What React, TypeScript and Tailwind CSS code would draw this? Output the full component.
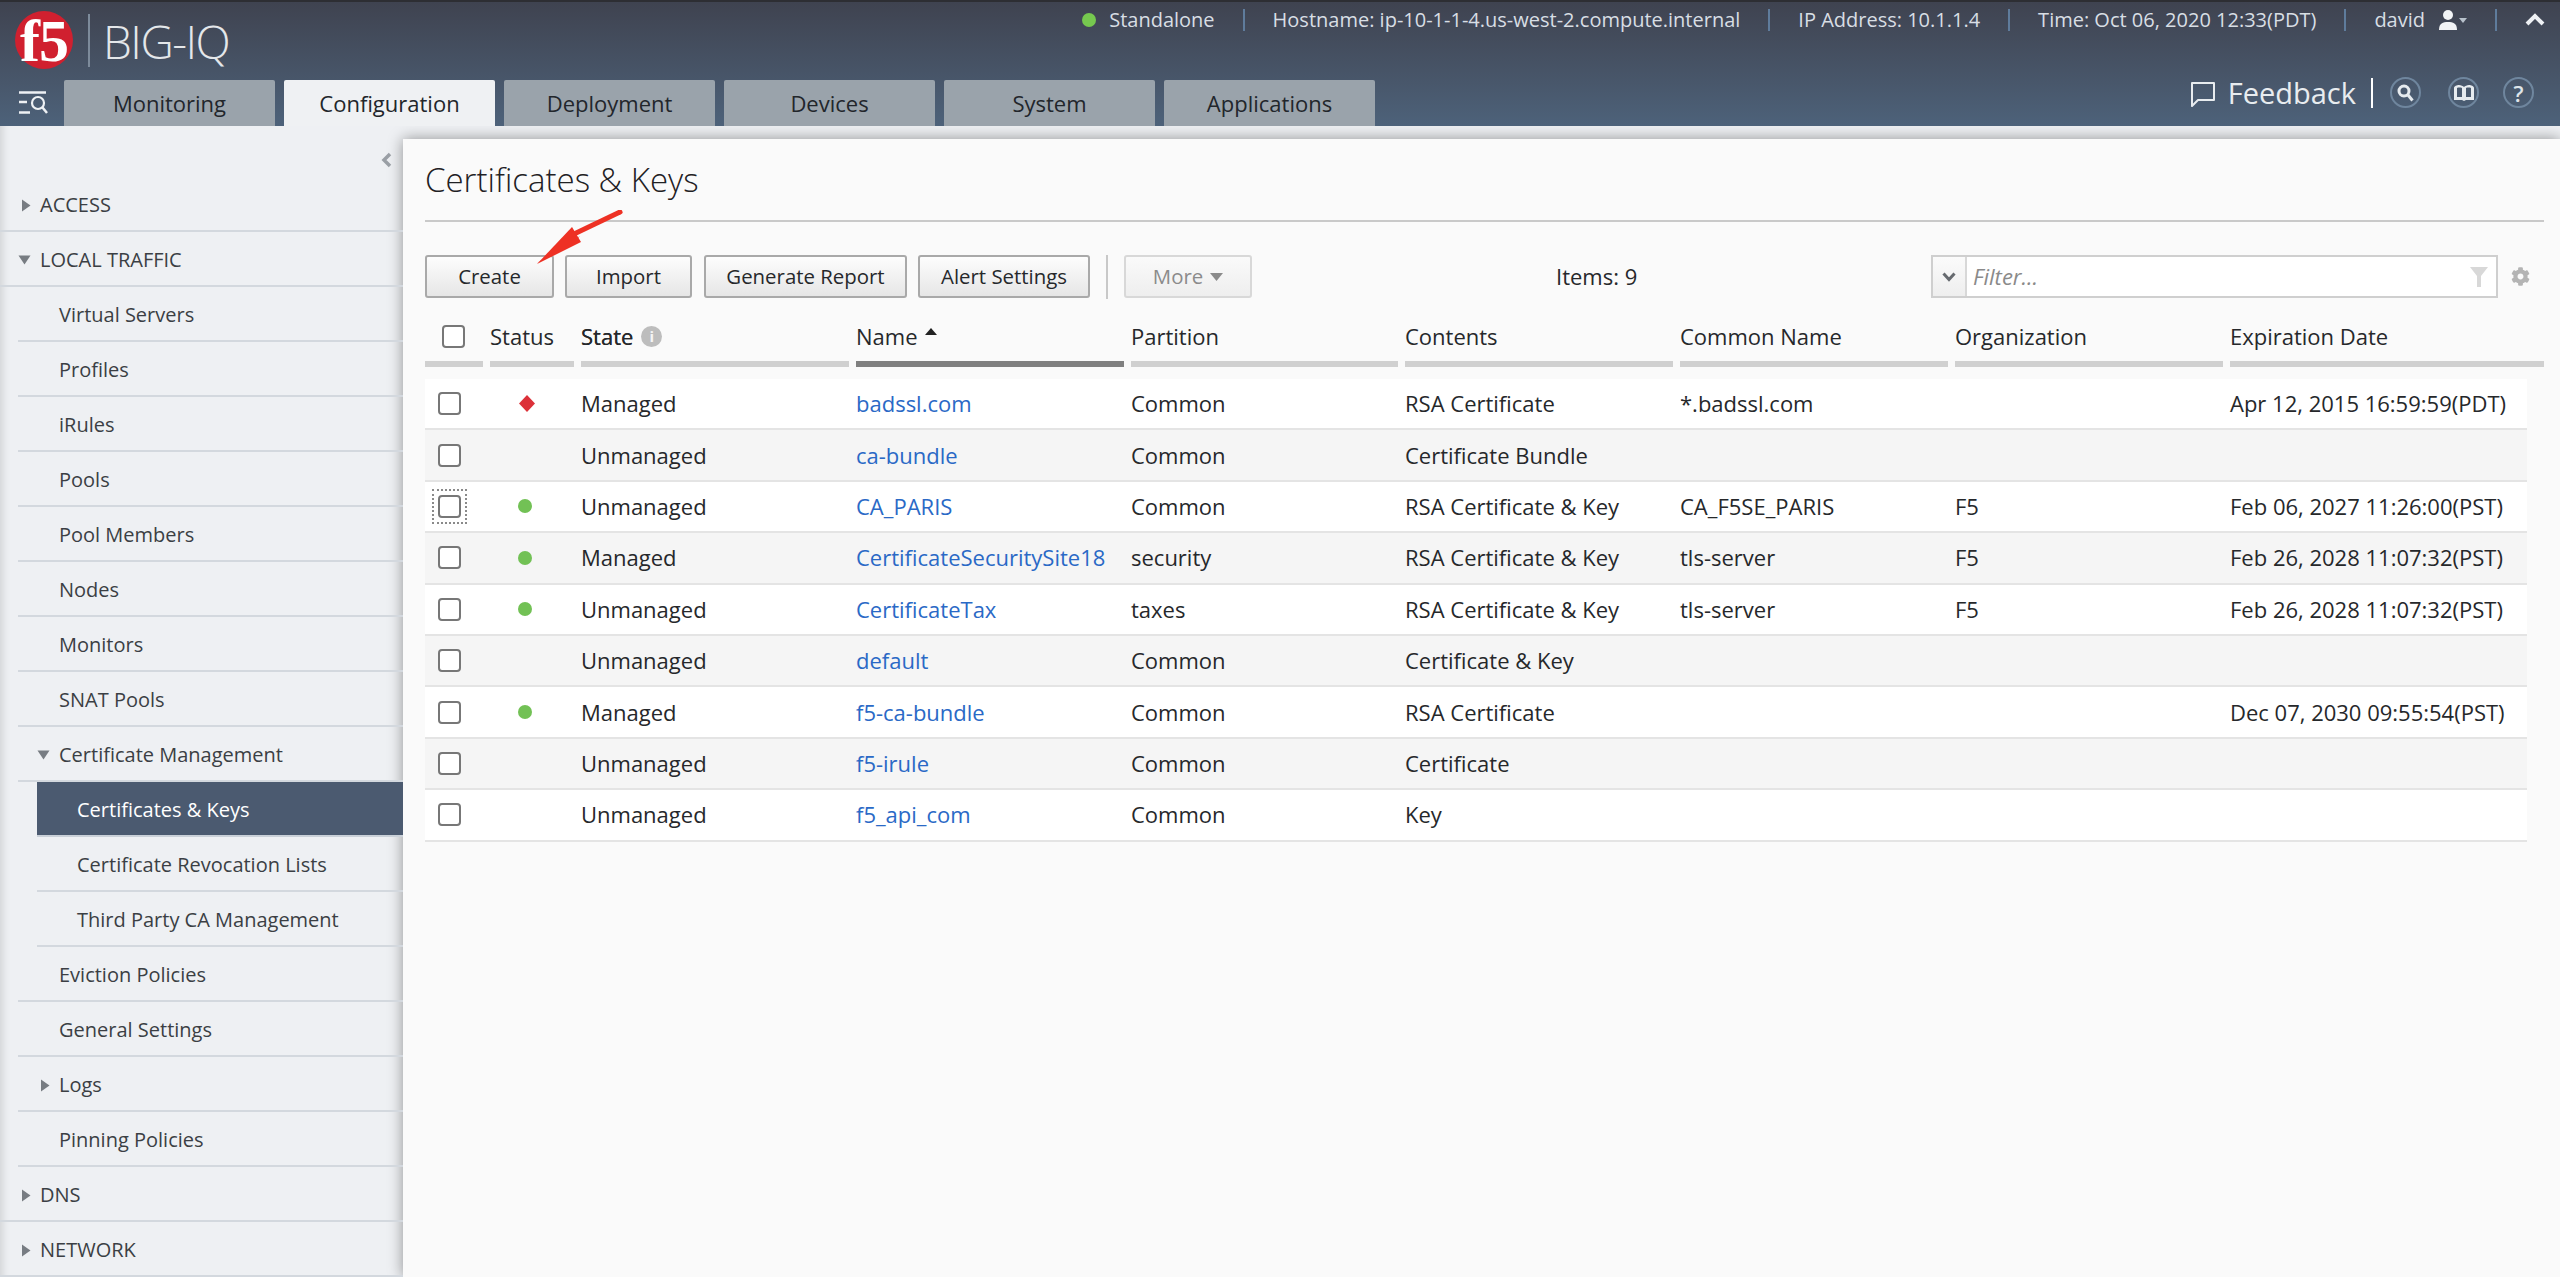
import React from "react";
import { FaCog } from "react-icons/fa";

const tabs = ["Monitoring", "Configuration", "Deployment", "Devices", "System", "Applications"];

type NavItem = { label: string; level: 0 | 1 | 2; arrow?: "right" | "down"; selected?: boolean };
const nav: NavItem[] = [
  { label: "ACCESS", level: 0, arrow: "right" },
  { label: "LOCAL TRAFFIC", level: 0, arrow: "down" },
  { label: "Virtual Servers", level: 1 },
  { label: "Profiles", level: 1 },
  { label: "iRules", level: 1 },
  { label: "Pools", level: 1 },
  { label: "Pool Members", level: 1 },
  { label: "Nodes", level: 1 },
  { label: "Monitors", level: 1 },
  { label: "SNAT Pools", level: 1 },
  { label: "Certificate Management", level: 1, arrow: "down" },
  { label: "Certificates & Keys", level: 2, selected: true },
  { label: "Certificate Revocation Lists", level: 2 },
  { label: "Third Party CA Management", level: 2 },
  { label: "Eviction Policies", level: 1 },
  { label: "General Settings", level: 1 },
  { label: "Logs", level: 1, arrow: "right" },
  { label: "Pinning Policies", level: 1 },
  { label: "DNS", level: 0, arrow: "right" },
  { label: "NETWORK", level: 0, arrow: "right" },
];

type Row = { status?: "ok" | "bad"; state: string; name: string; partition: string; contents: string; common?: string; org?: string; exp?: string; focus?: boolean };
const rows: Row[] = [
  { status: "bad", state: "Managed", name: "badssl.com", partition: "Common", contents: "RSA Certificate", common: "*.badssl.com", exp: "Apr 12, 2015 16:59:59(PDT)" },
  { state: "Unmanaged", name: "ca-bundle", partition: "Common", contents: "Certificate Bundle" },
  { status: "ok", state: "Unmanaged", name: "CA_PARIS", partition: "Common", contents: "RSA Certificate & Key", common: "CA_F5SE_PARIS", org: "F5", exp: "Feb 06, 2027 11:26:00(PST)", focus: true },
  { status: "ok", state: "Managed", name: "CertificateSecuritySite18", partition: "security", contents: "RSA Certificate & Key", common: "tls-server", org: "F5", exp: "Feb 26, 2028 11:07:32(PST)" },
  { status: "ok", state: "Unmanaged", name: "CertificateTax", partition: "taxes", contents: "RSA Certificate & Key", common: "tls-server", org: "F5", exp: "Feb 26, 2028 11:07:32(PST)" },
  { state: "Unmanaged", name: "default", partition: "Common", contents: "Certificate & Key" },
  { status: "ok", state: "Managed", name: "f5-ca-bundle", partition: "Common", contents: "RSA Certificate", exp: "Dec 07, 2030 09:55:54(PST)" },
  { state: "Unmanaged", name: "f5-irule", partition: "Common", contents: "Certificate" },
  { state: "Unmanaged", name: "f5_api_com", partition: "Common", contents: "Key" },
];

function Caret({ dir }: { dir: "right" | "down" }) {
  return dir === "right" ? (
    <svg width="10" height="13" viewBox="0 0 10 13" className="shrink-0"><path d="M1 0.5 L9.5 6.5 L1 12.5 Z" fill="#777c82" /></svg>
  ) : (
    <svg width="13" height="10" viewBox="0 0 13 10" className="shrink-0"><path d="M0.5 0.5 H12.5 L6.5 9.5 Z" fill="#777c82" /></svg>
  );
}

function TopSep() {
  return <div className="mx-[28px] h-[22px] w-[2px] bg-[#5f7c9c]" />;
}

function Logo() {
  return (
    <div className="flex h-[58px] w-[58px] shrink-0 items-center justify-center rounded-full bg-[#d0202f] pt-[3px] font-['Liberation_Serif',serif] text-[60px] leading-[55px] font-bold tracking-[-1px] text-white">
      f5
    </div>
  );
}

function CircleIcon({ children }: { children: React.ReactNode }) {
  return (
    <div className="flex h-[31px] w-[31px] items-center justify-center rounded-full border-2 border-[#6f869e] text-[#dfe5ea]">
      {children}
    </div>
  );
}

function Header() {
  return (
    <header className="h-[126px] shrink-0 border-t-2 border-[#2d2e33] bg-gradient-to-b from-[#3f4350] to-[#4d627a] flex flex-col">
      <div className="flex h-[78px] justify-between pl-[15px]">
        <div className="flex items-start pt-[9px]">
          <Logo />
          <div className="ml-[15px] mt-[3px] h-[53px] w-[2px] bg-[#7d8b9b]" />
          <span className="ml-[13px] mt-[-2px] text-[46px] leading-[64px] font-light tracking-[-1.5px] text-[#e4e7ea]">BIG-IQ</span>
        </div>
        <div className="flex h-[36px] items-center pr-[15px] text-[20px] text-[#d8dee4]">
          <span className="mr-[13px] h-[14px] w-[14px] rounded-full bg-[#76c94f]" />
          <span>Standalone</span>
          <TopSep />
          <span>Hostname: ip-10-1-1-4.us-west-2.compute.internal</span>
          <TopSep />
          <span>IP Address: 10.1.1.4</span>
          <TopSep />
          <span>Time: Oct 06, 2020 12:33(PDT)</span>
          <TopSep />
          <span>david</span>
          <svg width="28" height="20" viewBox="0 0 28 20" className="ml-[14px]">
            <circle cx="9" cy="5" r="5" fill="#f2f4f6" />
            <path d="M0 20 C0 13 4 12 9 12 C14 12 18 13 18 20 Z" fill="#f2f4f6" />
            <path d="M20 8 H28 L24 13 Z" fill="#b8c2cc" />
          </svg>
          <TopSep />
          <svg width="20" height="14" viewBox="0 0 20 14">
            <path d="M2 11 L10 3 L18 11" fill="none" stroke="#eef1f4" strokeWidth="4" />
          </svg>
        </div>
      </div>
      <div className="flex flex-1 items-end">
        <div className="flex h-[46px] w-[64px] items-center justify-center pl-[1px]">
          <svg width="30" height="24" viewBox="0 0 30 24" fill="none" stroke="#eef1f4">
            <path d="M1 1.5 H28" strokeWidth="2.5" />
            <path d="M1 11 H9" strokeWidth="2.5" />
            <path d="M1 21.5 H12" strokeWidth="2.5" />
            <circle cx="20" cy="12" r="6" strokeWidth="2.2" />
            <path d="M24.5 16.5 L29 22" strokeWidth="2.5" />
          </svg>
        </div>
        <div className="flex gap-[9px]">
          {tabs.map((t) => (
            <div
              key={t}
              className={
                t === "Configuration"
                  ? "flex h-[46px] w-[211px] items-center justify-center rounded-t-[2px] bg-[#eff1f3] text-[22px] text-[#22262b]"
                  : "flex h-[46px] w-[211px] items-center justify-center rounded-t-[2px] bg-[#9aa3ab] text-[22px] text-[#22262b]"
              }
            >
              {t}
            </div>
          ))}
        </div>
        <div className="ml-auto flex h-[46px] items-start pr-[26px] text-[#e8ecef]">
          <svg width="26" height="26" viewBox="0 0 26 26" fill="none" stroke="#e8ecef" strokeWidth="2" className="mt-[1px]">
            <path d="M2 2 H24 V19 H8 L2 25 Z" strokeLinejoin="round" />
          </svg>
          <span className="ml-[12px] mt-[-2px] text-[29px] leading-[30px] font-normal">Feedback</span>
          <div className="ml-[15px] mt-[-2px] h-[30px] w-[2px] bg-white" />
          <div className="ml-[17px] flex mt-[-3px]">
            <CircleIcon>
              <svg width="17" height="18" viewBox="0 0 17 18" fill="none" stroke="#e6ebef" strokeWidth="3">
                <circle cx="7" cy="7" r="5" />
                <path d="M11 11 L15.5 16.5" />
              </svg>
            </CircleIcon>
            <div className="w-[27px]" />
            <CircleIcon>
              <svg width="20" height="16" viewBox="0 0 20 16" fill="#e6ebef">
                <path d="M0 3 C0 1 3 0 5 0 C7 0 9 1 10 2 C11 1 13 0 15 0 C17 0 20 1 20 3 V15 H12 L10 16 L8 15 H0 Z M3 3 V12 H8 V3 C7 2.4 4 2.4 3 3 Z M12 3 V12 H17 V3 C16 2.4 13 2.4 12 3 Z" fillRule="evenodd" />
              </svg>
            </CircleIcon>
            <div className="w-[24px]" />
            <CircleIcon>
              <span className="text-[22px] leading-none font-semibold">?</span>
            </CircleIcon>
          </div>
        </div>
      </div>
    </header>
  );
}

function Sidebar() {
  return (
    <aside className="relative w-[403px] shrink-0 pt-[51px] shadow-[inset_10px_0_8px_-8px_rgba(0,0,0,0.14)]">
      <svg width="11" height="16" viewBox="0 0 11 16" className="absolute left-[381px] top-[26px]">
        <path d="M9 2 L3 8 L9 14" fill="none" stroke="#9a9fa5" strokeWidth="3.5" />
      </svg>
      {nav.map((n) => {
        const wrap = n.level === 0 ? "ml-0" : n.level === 1 ? "ml-[18px]" : "ml-[37px]";
        const base = "flex h-[55px] items-center border-b-2 pt-[3px] text-[20px] ";
        const color = n.selected ? "bg-[#4b5a70] text-white border-[#c9d0d8]" : "border-[#d3d8de] text-[#3b3f44]";
        return (
          <div key={n.label} className={wrap}>
            <div className={base + color}>
              <div className={n.level === 0 ? "flex w-[40px] justify-end pr-[9px]" : n.level === 1 ? "flex w-[41px] justify-end pr-[9px]" : "w-[40px]"}>
                {n.arrow && <Caret dir={n.arrow} />}
              </div>
              <span>{n.label}</span>
            </div>
          </div>
        );
      })}
    </aside>
  );
}

function Btn({ w, children, disabled }: { w: string; children: React.ReactNode; disabled?: boolean }) {
  return (
    <div
      className={
        w +
        (disabled
          ? " flex h-[43px] items-center justify-center rounded-[3px] border-2 border-[#d8d8d8] bg-gradient-to-b from-[#fafafa] to-[#eeeeee] text-[20.4px] text-[#8b8b8b]"
          : " flex h-[43px] items-center justify-center rounded-[3px] border-2 border-[#a9a9a9] bg-gradient-to-b from-[#fdfdfd] to-[#e6e6e6] text-[20.4px] text-[#26282b]")
      }
    >
      {children}
    </div>
  );
}

const cols = "grid grid-cols-[58px_84px_268px_268px_267px_268px_268px_268px_1fr] gap-x-[7px]";

function HeadCell({ children, dark }: { children?: React.ReactNode; dark?: boolean }) {
  return (
    <div className="flex h-[69px] flex-col justify-end">
      <div className="flex h-[28px] items-center text-[22px] text-[#26282b]">{children}</div>
      <div className={dark ? "mt-[11px] h-[6px] bg-[#808080]" : "mt-[11px] h-[6px] bg-[#d0d0d0]"} />
    </div>
  );
}

function Box({ focus }: { focus?: boolean }) {
  return (
    <div className={focus ? "flex h-[35px] w-[35px] items-center justify-center border-2 border-dotted border-[#8a8a8a]" : "flex h-[35px] w-[35px] items-center justify-center"}>
      <div className="h-[23px] w-[23px] rounded-[4px] border-2 border-[#777777] bg-white" />
    </div>
  );
}

function Content() {
  return (
    <main className="mt-[13px] flex-1 bg-[#fafafa] pl-[22px] pr-[16px] shadow-[0_0_14px_rgba(0,0,0,0.4)]">
      <div className="flex h-[83px] items-center border-b-2 border-[#c9c9c9]">
        <h1 className="text-[33px] font-light text-[#1f2124]">Certificates &amp; Keys</h1>
      </div>
      <div className="relative mt-[33px] flex h-[43px] items-center">
        <Btn w="w-[129px]">Create</Btn>
        <div className="w-[11px]" />
        <Btn w="w-[127px]">Import</Btn>
        <div className="w-[12px]" />
        <Btn w="w-[203px]">Generate Report</Btn>
        <div className="w-[11px]" />
        <Btn w="w-[172px]">Alert Settings</Btn>
        <div className="mx-[16px] h-[44px] w-[2px] bg-[#c8c8c8]" />
        <Btn w="w-[128px]" disabled>
          More
          <svg width="13" height="8" viewBox="0 0 13 8" className="ml-[7px]"><path d="M0 0 H13 L6.5 8 Z" fill="#8b8b8b" /></svg>
        </Btn>
        <span className="ml-[304px] text-[22px] text-[#26282b]">Items: 9</span>
        <div className="ml-auto flex h-[43px] w-[567px] border-2 border-[#cfcfcf] bg-white">
          <div className="flex w-[34px] items-center justify-center border-r-2 border-[#d8d8d8] bg-gradient-to-b from-[#fbfbfb] to-[#eeeeee]">
            <svg width="14" height="10" viewBox="0 0 14 10"><path d="M1.5 1.5 L7 7.5 L12.5 1.5" fill="none" stroke="#666a6f" strokeWidth="3" /></svg>
          </div>
          <span className="ml-[6px] self-center text-[22px] italic text-[#8a8a8a]">Filter...</span>
          <svg width="18" height="20" viewBox="0 0 18 20" className="ml-auto mr-[8px] self-center"><path d="M0 0 H18 L11 9 V20 H7 V9 Z" fill="#d8d8d8" /></svg>
        </div>
        <FaCog className="ml-[13px] mr-[14px] h-[19px] w-[19px] text-[#b4b4b4]" />
        {/* annotation arrow */}
        <svg width="100" height="70" viewBox="0 0 100 70" className="absolute left-[105px] top-[-45px]">
          <path d="M7 53 L50 26 L40 36 Z" fill="#ee3124" />
          <path d="M7 54 L42 17 L51 32 Z" fill="#ee3124" />
          <path d="M44 24 L90 2" stroke="#ee3124" strokeWidth="5" strokeLinecap="round" />
        </svg>
      </div>
      <div className={cols + " mb-[12px]"}>
        <HeadCell>
          <div className="ml-[17px] h-[23px] w-[23px] rounded-[4px] border-2 border-[#777777] bg-white" />
        </HeadCell>
        <HeadCell>Status</HeadCell>
        <HeadCell>
          <span className="[text-shadow:0_0_0.6px_#26282b]">State</span>
          <span className="ml-[8px] flex h-[21px] w-[21px] items-center justify-center rounded-full bg-[#bdbdbd] text-[15px] font-bold text-[#f5f5f5]">i</span>
        </HeadCell>
        <HeadCell dark>
          Name
          <svg width="12" height="7" viewBox="0 0 12 7" className="ml-[7px] mb-[9px]"><path d="M6 0 L12 7 H0 Z" fill="#222222" /></svg>
        </HeadCell>
        <HeadCell>Partition</HeadCell>
        <HeadCell>Contents</HeadCell>
        <HeadCell>Common Name</HeadCell>
        <HeadCell>Organization</HeadCell>
        <HeadCell>Expiration Date</HeadCell>
      </div>
      <div className="mr-[17px]">
        {rows.map((r, i) => (
          <div
            key={r.name}
            className={
              cols +
              (i % 2 === 0
                ? " h-[51.4px] items-center border-b-2 border-[#e4e4e4] bg-white text-[22px] text-[#26282b]"
                : " h-[51.4px] items-center border-b-2 border-[#e4e4e4] bg-[#f5f5f5] text-[22px] text-[#26282b]")
            }
          >
            <div className="pl-[7px]"><Box focus={r.focus} /></div>
            <div className="flex justify-center pr-[14px]">
              {r.status === "ok" && <span className="h-[14px] w-[14px] rounded-full bg-[#72c155]" />}
              {r.status === "bad" && (
                <svg width="16" height="17" viewBox="0 0 16 17" className="ml-[4px]"><path d="M8 0 L16 8.5 L8 17 L0 8.5 Z" fill="#dc3139" /></svg>
              )}
            </div>
            <div>{r.state}</div>
            <div className="text-[#2a69c6]">{r.name}</div>
            <div>{r.partition}</div>
            <div>{r.contents}</div>
            <div>{r.common}</div>
            <div>{r.org}</div>
            <div className="whitespace-nowrap">{r.exp}</div>
          </div>
        ))}
      </div>
    </main>
  );
}

export default function App() {
  return (
    <div className="flex h-[1277px] flex-col overflow-hidden font-['Open_Sans',sans-serif]">
      <Header />
      <div className="flex flex-1 overflow-hidden bg-[#eef0f3]">
        <Sidebar />
        <Content />
      </div>
    </div>
  );
}
